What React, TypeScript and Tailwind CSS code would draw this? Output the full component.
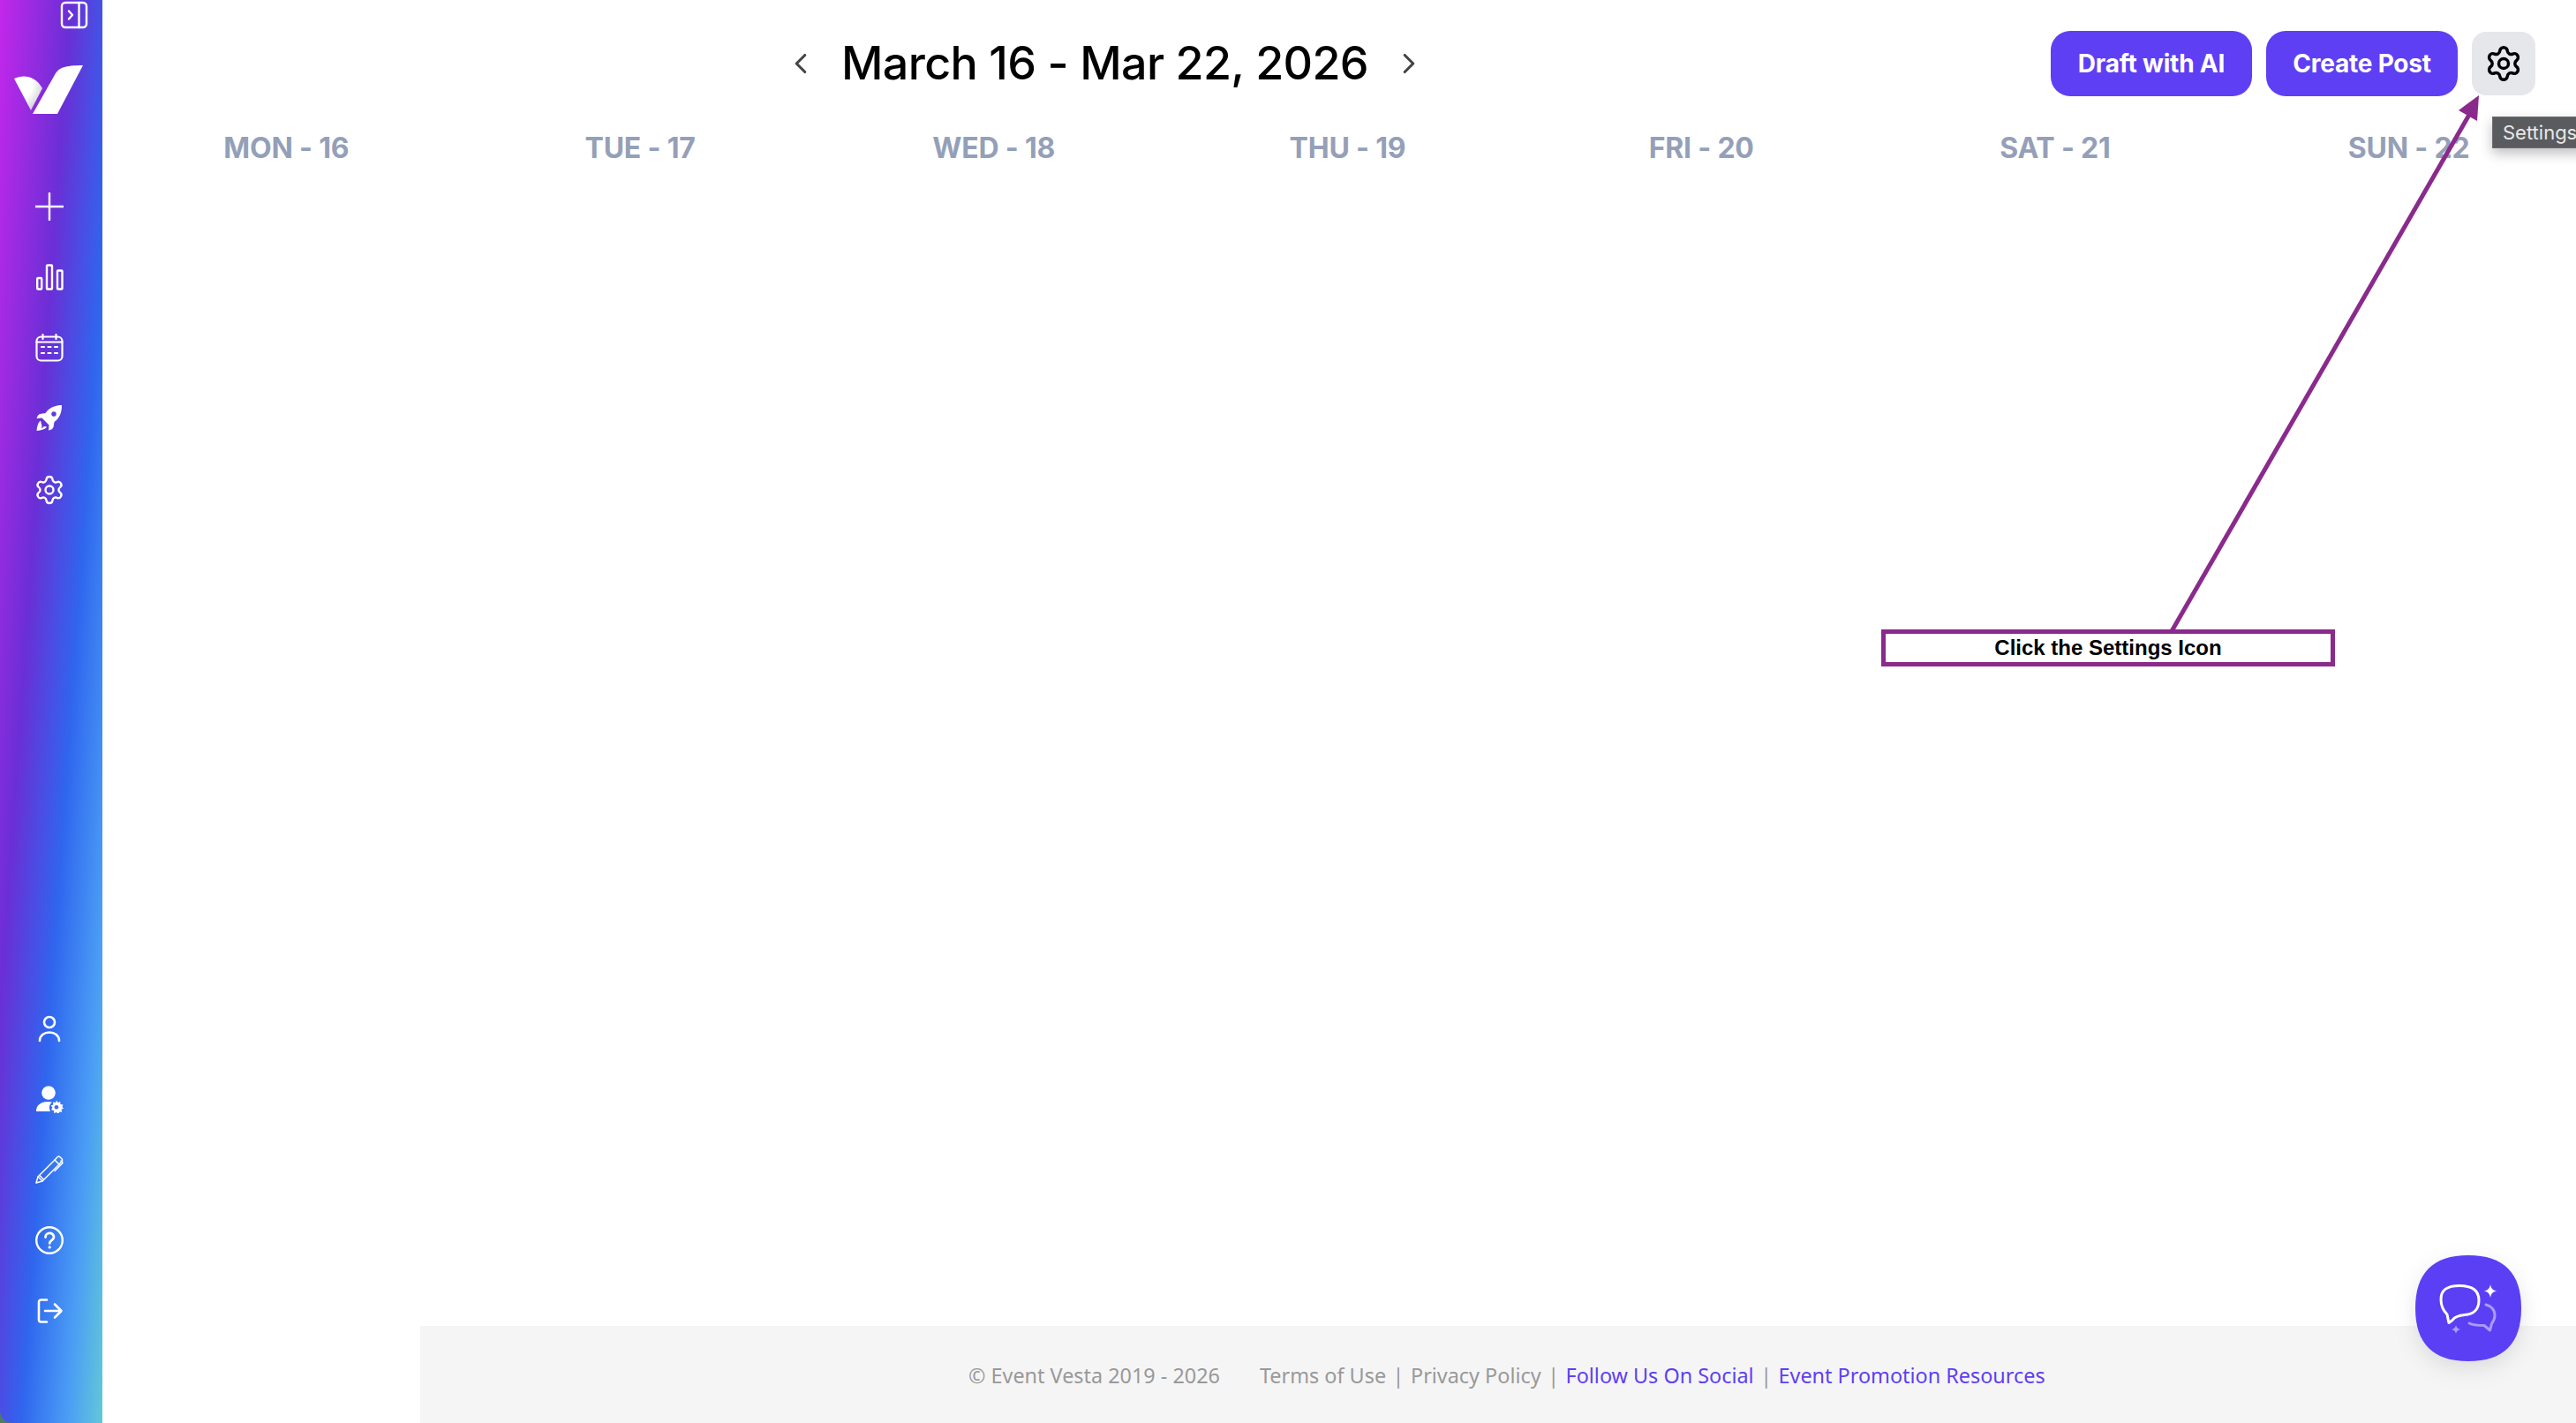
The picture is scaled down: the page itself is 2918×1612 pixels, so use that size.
import React from "react";
import { Settings, ChevronLeft, ChevronRight } from "lucide-react";

const ic = "w-8 h-8 text-white";

function Toggle() {
  return (
    <svg width="32" height="32" viewBox="0 0 32 32" fill="none" stroke="white" strokeWidth="2.4" strokeLinecap="round" strokeLinejoin="round">
      <rect x="2" y="2" width="28" height="28" rx="4" />
      <path d="M21.5 2v28" />
      <path d="M10 11.5l4 4.5-4 4.5" />
    </svg>
  );
}
function Logo() {
  return (
    <svg width="80" height="58" viewBox="0 0 80 58" fill="none">
      <defs>
        <radialGradient id="lg" cx="20%" cy="20%" r="90%">
          <stop offset="0.5" stopColor="#ffffff" />
          <stop offset="1" stopColor="#cfcfd4" />
        </radialGradient>
      </defs>
      <path d="M1 15C12 10 25 12 33 26L20 51Z" fill="url(#lg)" />
      <path d="M22 55L48 9C52 3 58 0 79 0L50 55Z" fill="white" />
    </svg>
  );
}
function Plus() {
  return (
    <svg className={ic} viewBox="0 0 32 32" fill="none" stroke="white" strokeWidth="2.4" strokeLinecap="round">
      <path d="M16 1v30M0.5 16h31" />
    </svg>
  );
}
function Bars() {
  return (
    <svg className={ic} viewBox="0 0 32 32" fill="none" stroke="white" strokeWidth="2.4" strokeLinejoin="round">
      <rect x="2.2" y="17" width="5" height="12.5" rx="0.8" />
      <rect x="13" y="2.5" width="6" height="27" rx="0.8" />
      <rect x="25" y="8.5" width="5.5" height="21" rx="0.8" />
    </svg>
  );
}
function Cal() {
  return (
    <svg className={ic} viewBox="0 0 32 32" fill="none" stroke="white" strokeWidth="2.2" strokeLinecap="round">
      <rect x="1.5" y="3.5" width="29" height="27" rx="5" />
      <path d="M8.5 1v5M23.5 1v5M1.5 9.5h29" />
      <path d="M7 15h3M14.5 15h3M22 15h3M7 22h3M14.5 22h3M22 22h3" />
    </svg>
  );
}
function Rocket() {
  return (
    <svg className={ic} viewBox="0 0 32 32" fill="white">
      <path
        fillRule="evenodd"
        d="M30 1C23 1 16 3.500 11.500 10L5 11C3.500 11.500 2 13.500 1.500 16L7.500 15.500L15.500 23.500L15 29.500C18 29 20 27.500 20.500 26L21.500 20C28 15.500 30 9 30 1ZM21 8.200A2.800 2.800 0 1 1 20.990 8.200Z"
      />
      <path d="M6 18.500C3.500 20 2 24.500 1.500 30C7 29.500 11.500 28 13 25.500L10 25L7 27.500L7.500 24.500Z" />
    </svg>
  );
}
function User() {
  return (
    <svg className={ic} viewBox="0 0 32 32" fill="none" stroke="white" strokeWidth="2.6" strokeLinecap="round">
      <circle cx="16" cy="9" r="6" />
      <path d="M5 30c0-6 5-9.500 11-9.500S27 24 27 30" />
    </svg>
  );
}
function UserGear() {
  return (
    <svg className={ic} viewBox="0 0 32 32" fill="white">
      <circle cx="15" cy="9" r="7.800" />
      <path d="M1 30c0-7 5-11 13-11 2 0 4 .3 5 .8-3 2-4 6-2 10.200z" />
      <path d="M24 17.500l1.500 2.500 2.700-1 .3 3 3 .4-1 2.600 1.500 1.500-2.500 1.500.8 2.700-2.900-.1-1.400 2.400-2-2-2.800.9-.3-3-2.800-.7 1.200-2.600-1.700-2.100 2.700-1.100-.3-2.900 2.900.5z" />
      <circle cx="24" cy="25.200" r="2.300" fill="#3f6eec" />
    </svg>
  );
}
function Pen() {
  return (
    <svg className={ic} viewBox="0 0 32 32" fill="none" stroke="white" strokeWidth="1.500" strokeLinejoin="round" strokeLinecap="round">
      <path d="M1 31l2-7L22 5l5 5L8 29z" />
      <path d="M3 24l5 5M4.800 22.500l4.700 4.700" />
      <path d="M22 5l3-3.200c1-.9 2-.9 3 0l2 2c.8.9.800 1.800 0 2.800L27 10" />
      <path d="M29 6l1.500 1.500c.5.5.5 1 0 1.500L22 17.500" />
    </svg>
  );
}
function Help() {
  return (
    <svg className={ic} viewBox="0 0 32 32" fill="none" stroke="white" strokeWidth="2.4" strokeLinecap="round">
      <circle cx="16" cy="16" r="14.800" />
      <path d="M11.500 12.500c0-6 9.500-6 9.500-.2 0 3.500-4.500 3.500-4.800 7" strokeWidth="2.800" />
      <path d="M16.200 23.800v.1" strokeWidth="3.200" />
    </svg>
  );
}
function Logout() {
  return (
    <svg className={ic} viewBox="0 0 32 32" fill="none" stroke="white" strokeWidth="2.600" strokeLinecap="round" strokeLinejoin="round">
      <path d="M13 3.500H6.500C5 3.500 4 4.500 4 6v20c0 1.500 1 2.500 2.500 2.500H13" />
      <path d="M11 16h18M22 8.500l7.500 7.500-7.500 7.500" />
    </svg>
  );
}
function ChatGraphic() {
  return (
    <svg width="120" height="120" viewBox="0 0 120 120" fill="none" className="drop-shadow-[0_8px_12px_rgba(0,0,0,0.1)]">
      <path d="M60 0C100 0 120 20 120 60S100 120 60 120S0 100 0 60S20 0 60 0Z" fill="#5b3ff5" />
      <path
        d="M29 50C29 39 36 34.500 50 34.500S72 39 72 51C72 62 65 67 56 67.500C50 68 45 69 42 73.500L38 76.500C37 73 36.500 69 36 67C32 63 29 58 29 50Z"
        stroke="white"
        strokeWidth="3"
        strokeLinejoin="round"
      />
      <path d="M85 33C86 38 88 39.800 92.500 40.500C88 41.200 86 43 85 48C84 43 82 41.200 77.500 40.500C82 39.800 84 38 85 33Z" fill="white" />
      <path d="M80 56C86 57.500 90 62 90 68C90 72 88.500 75 86.500 77.500L84.500 85L78 79.500C72 79.500 66 79.500 61 77" stroke="#a99bf8" strokeWidth="3" strokeLinecap="round" strokeLinejoin="round" />
      <path d="M46 79C46.700 82 47.800 83.300 51 84C47.800 84.700 46.700 86 46 89C45.300 86 44.200 84.700 41 84C44.200 83.300 45.300 82 46 79Z" fill="#a99bf8" />
    </svg>
  );
}

const days = ["MON - 16", "TUE - 17", "WED - 18", "THU - 19", "FRI - 20", "SAT - 21", "SUN - 22"];
const navTop = [Plus, Bars, Cal, Rocket];
const navBottom = [User, UserGear, Pen, Help, Logout];

export default function App() {
  return (
    <div className="relative flex h-[1612px] w-[2918px] overflow-hidden bg-white">
      <div className="w-[116px] shrink-0 bg-[#4f7a68]">
        <aside className="flex h-full w-full flex-col items-center rounded-bl-[14px] bg-[linear-gradient(94deg,#c327ea_0%,#6a2fd6_35%,#2f66ee_60%,#4a9cf5_82%,#62c8d8_100%)]">
          <div className="flex w-full justify-end pr-[16px] pt-[1px]">
            <Toggle />
          </div>
          <div className="mt-[41px] w-full pl-[15px]">
            <Logo />
          </div>
          <div className="mt-[86px] flex flex-col items-center gap-[48px] pr-[4px]">
            {navTop.map((I, i) => (
              <I key={i} />
            ))}
            <Settings className="-mt-[1px] h-[36px] w-[36px] text-white" strokeWidth={1.6} />
          </div>
          <div className="mb-[111px] mt-auto flex flex-col items-center gap-[48px] pr-[4px]">
            {navBottom.map((I, i) => (
              <I key={i} />
            ))}
          </div>
        </aside>
      </div>

      <main className="flex min-w-0 flex-1 flex-col font-['Inter',sans-serif]">
        <header className="flex h-[145px] shrink-0 items-start pl-[772px] pt-[35px]">
          <div className="flex h-[74px] items-center">
            <ChevronLeft className="h-[38px] w-[38px] text-[#444444]" strokeWidth={2} />
            <h1 className="ml-[27px] text-[52px] font-medium leading-none tracking-[-0.65px] text-black">March 16 - Mar 22, 2026</h1>
            <ChevronRight className="ml-[27px] h-[38px] w-[38px] text-[#444444]" strokeWidth={2} />
          </div>
          <div className="ml-auto mr-[46px] flex items-center gap-[16px]">
            <button className="h-[74px] w-[228px] rounded-[22px] bg-[#5f3ff3] text-[28px] font-bold tracking-[-0.2px] text-white">Draft with AI</button>
            <button className="h-[74px] w-[217px] rounded-[22px] bg-[#5f3ff3] text-[28px] font-bold tracking-[-0.2px] text-white">Create Post</button>
            <div className="flex h-[72px] w-[72px] items-center justify-center rounded-[16px] bg-[#e5e7eb]">
              <Settings className="h-[44px] w-[44px] text-black" strokeWidth={1.9} />
            </div>
          </div>
        </header>
        <div className="grid w-[2813px] shrink-0 grid-cols-7 pl-[8px]">
          {days.map((d) => (
            <div key={d} className="text-center text-[32px] font-bold leading-[45px] tracking-[-0.2px] text-[#94a0b8]">
              {d}
            </div>
          ))}
        </div>
        <footer className="ml-[360px] mt-auto flex h-[110px] shrink-0 items-center bg-[#f5f5f5] pl-[621px] pt-[3px] font-['Noto_Sans',sans-serif] text-[23.4px] text-[#999999]">
          <span>© Event Vesta 2019 - 2026</span>
          <span className="ml-[45px]">Terms of Use</span>
          <span className="mx-[7.5px]">|</span>
          <span>Privacy Policy</span>
          <span className="mx-[7.5px]">|</span>
          <span className="text-[#5f3ff3]">Follow Us On Social</span>
          <span className="mx-[7.5px]">|</span>
          <span className="text-[#5f3ff3]">Event Promotion Resources</span>
        </footer>
      </main>

      {/* tooltip */}
      <div className="absolute left-[2823px] top-[132px] flex h-[36px] items-center whitespace-nowrap border border-[#6b6c6f] bg-[#5a5b5e] px-[11px] font-['Inter',sans-serif] text-[22px] text-[#e8e8e8] shadow-[0_6px_14px_rgba(0,0,0,0.25)]">
        Settings
      </div>

      {/* annotation arrow */}
      <svg className="pointer-events-none absolute left-0 top-0" width="2918" height="1612" fill="none">
        <path d="M2460 715L2797 130" stroke="#8a2a8c" strokeWidth="5" />
        <path d="M2808 108L2785 125L2806 137Z" fill="#8a2a8c" />
      </svg>
      <div className="absolute left-[2131px] top-[713px] flex h-[42px] w-[514px] items-center justify-center border-[5px] border-[#8a2a8c] bg-white font-['Liberation_Sans',sans-serif] text-[24px] font-bold leading-none text-black">
        Click the Settings Icon
      </div>

      {/* chat launcher */}
      <button className="absolute left-[2736px] top-[1422px] block h-[120px] w-[120px]">
        <ChatGraphic />
      </button>
    </div>
  );
}
